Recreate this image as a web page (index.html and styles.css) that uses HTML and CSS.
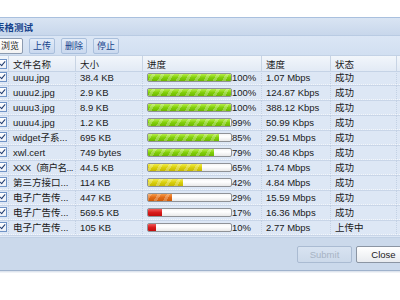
FILE: index.html
```html
<!DOCTYPE html>
<html>
<head>
<meta charset="utf-8">
<link rel="stylesheet" href="styles.css">
</head>
<body>
<div class="win">
  <div class="title"><span class="title-text">表格测试</span></div>
  <div class="toolbar">
    <span class="btn btn-browse">浏览</span>
    <span class="btn">上传</span>
    <span class="btn">删除</span>
    <span class="btn">停止</span>
  </div>
  <div class="grid">
    <div class="row head">
      <div class="c c0"><span class="cb"></span></div>
      <div class="c">文件名称</div>
      <div class="c">大小</div>
      <div class="c">进度</div>
      <div class="c">速度</div>
      <div class="c">状态</div>
      <div class="c last"></div>
    </div>
    <div class="body">
      <div class="inner">
        <div class="row"><div class="c c0"><span class="cb"></span></div><div class="c">uuuu.jpg</div><div class="c">38.4 KB</div><div class="c prog"><span class="bar"><span class="fill green" style="width:100%"></span></span><span class="pct">100%</span></div><div class="c">1.07 Mbps</div><div class="c">成功</div><div class="c last"></div></div>
        <div class="row"><div class="c c0"><span class="cb"></span></div><div class="c">uuuu2.jpg</div><div class="c">2.9 KB</div><div class="c prog"><span class="bar"><span class="fill green" style="width:100%"></span></span><span class="pct">100%</span></div><div class="c">124.87 Kbps</div><div class="c">成功</div><div class="c last"></div></div>
        <div class="row"><div class="c c0"><span class="cb"></span></div><div class="c">uuuu3.jpg</div><div class="c">8.9 KB</div><div class="c prog"><span class="bar"><span class="fill green" style="width:100%"></span></span><span class="pct">100%</span></div><div class="c">388.12 Kbps</div><div class="c">成功</div><div class="c last"></div></div>
        <div class="row"><div class="c c0"><span class="cb"></span></div><div class="c">uuuu4.jpg</div><div class="c">1.2 KB</div><div class="c prog"><span class="bar"><span class="fill green" style="width:99%"></span></span><span class="pct">99%</span></div><div class="c">50.99 Kbps</div><div class="c">成功</div><div class="c last"></div></div>
        <div class="row"><div class="c c0"><span class="cb"></span></div><div class="c">widget子系...</div><div class="c">695 KB</div><div class="c prog"><span class="bar"><span class="fill green" style="width:85%"></span></span><span class="pct">85%</span></div><div class="c">29.51 Mbps</div><div class="c">成功</div><div class="c last"></div></div>
        <div class="row"><div class="c c0"><span class="cb"></span></div><div class="c">xwl.cert</div><div class="c">749 bytes</div><div class="c prog"><span class="bar"><span class="fill green" style="width:79%"></span></span><span class="pct">79%</span></div><div class="c">30.48 Kbps</div><div class="c">成功</div><div class="c last"></div></div>
        <div class="row"><div class="c c0"><span class="cb"></span></div><div class="c tight">XXX（商户名...</div><div class="c">44.5 KB</div><div class="c prog"><span class="bar"><span class="fill yellow" style="width:65%"></span></span><span class="pct">65%</span></div><div class="c">1.74 Mbps</div><div class="c">成功</div><div class="c last"></div></div>
        <div class="row"><div class="c c0"><span class="cb"></span></div><div class="c">第三方接口...</div><div class="c">114 KB</div><div class="c prog"><span class="bar"><span class="fill yellow" style="width:42%"></span></span><span class="pct">42%</span></div><div class="c">4.84 Mbps</div><div class="c">成功</div><div class="c last"></div></div>
        <div class="row"><div class="c c0"><span class="cb"></span></div><div class="c">电子广告传...</div><div class="c">447 KB</div><div class="c prog"><span class="bar"><span class="fill orange" style="width:29%"></span></span><span class="pct">29%</span></div><div class="c">15.59 Mbps</div><div class="c">成功</div><div class="c last"></div></div>
        <div class="row"><div class="c c0"><span class="cb"></span></div><div class="c">电子广告传...</div><div class="c">569.5 KB</div><div class="c prog"><span class="bar"><span class="fill red" style="width:17%"></span></span><span class="pct">17%</span></div><div class="c">16.36 Mbps</div><div class="c">成功</div><div class="c last"></div></div>
        <div class="row"><div class="c c0"><span class="cb"></span></div><div class="c">电子广告传...</div><div class="c">105 KB</div><div class="c prog"><span class="bar"><span class="fill red" style="width:10%"></span></span><span class="pct">10%</span></div><div class="c">2.77 Mbps</div><div class="c">上传中</div><div class="c last"></div></div>
      </div>
    </div>
  </div>
  <div class="footer">
    <span class="fbtn disabled">Submit</span>
    <span class="fbtn">Close</span>
  </div>
</div>
</body>
</html>
```

FILE: styles.css
```css
html, body {
  margin: 0;
  padding: 0;
  background: #ffffff;
  overflow: hidden;
  width: 400px;
  height: 300px;
}
body {
  font-family: "Liberation Sans", Arial, "Noto Sans CJK SC", sans-serif;
  font-size: 9.5px;
  color: #1a1a1a;
}
.win {
  margin-top: 17px;
  width: 420px;
  border-top: 1px solid #a9c0de;
  border-bottom: 1px solid #9fb2cc;
  box-shadow: 0 1px 0 #dfe5ee, 0 2px 0 #f0f3f7;
  background: #cbd9eb;
}
.title {
  height: 17px;
  display: flex;
  align-items: center;
  background: linear-gradient(#d9e4f3, #c8d7eb);
  border-bottom: 1px solid #b9cbe3;
}
.title-text {
  margin-left: -5px;
  font-weight: bold;
  font-size: 9.5px;
  color: #15428b;
}
.toolbar {
  height: 19px;
  display: flex;
  align-items: center;
  gap: 6px;
  background: linear-gradient(#dbe6f5, #d1dff1);
  border-bottom: 1px solid #c3d2e6;
}
.btn {
  height: 14px;
  line-height: 14px;
  padding: 0 3px;
  width: 18px;
  text-align: center;
  border: 1px solid #a9bfdc;
  border-radius: 2px;
  background: linear-gradient(#e3ecf8, #c9d8ee);
  color: #15428b;
  font-size: 9px;
}
.btn-browse {
  margin-left: -8px;
  width: 23px;
  background: linear-gradient(#ffffff, #f3f3f3);
  border-color: #8c9bb0;
  color: #1a1a1a;
  text-align: right;
}
.grid {
  background: #dde7f5;
}
.row {
  display: grid;
  grid-template-columns: 9px 67px 67px 119px 69px 66px 1fr;
  height: 14px;
  border-bottom: 1px dotted #f4f7fb;
  box-shadow: 0 1px 0 rgba(160,180,210,0.35);
}
.head {
  height: 15px;
  border-bottom: 1px solid #c5d3e6;
  box-shadow: none;
  background: linear-gradient(#f2f6fb, #e2eaf5);
}
.c {
  display: flex;
  align-items: center;
  padding-left: 4px;
  white-space: nowrap;
  overflow: hidden;
  border-right: 1px dotted #c3d1e4;
}
.c.tight {
  letter-spacing: -0.5px;
}
.head .c {
  border-right: 1px solid #c8d4e4;
}
.c0 {
  padding-left: 0;
}
.c.last {
  border-right: none;
}
.cb {
  position: relative;
  flex: none;
  margin-left: -3px;
  width: 8px;
  height: 8px;
  border: 1px solid #6f93c6;
  background: linear-gradient(#ffffff, #e9eef6);
}
.cb::after {
  content: "";
  position: absolute;
  left: 3px;
  top: 0px;
  width: 2px;
  height: 5px;
  border-right: 1.5px solid #203c70;
  border-bottom: 1.5px solid #203c70;
  transform: rotate(40deg);
}
.body {
  height: 165px;
  overflow: hidden;
}
.inner {
  margin-top: -2px;
}
.body .row {
  height: 14px;
}
.prog {
  padding-left: 4px;
}
.bar {
  flex: none;
  display: block;
  width: 83px;
  height: 7px;
  border: 1px solid #8f9297;
  border-radius: 2px;
  background: linear-gradient(#f6f6f6, #ffffff 40%, #e8e8e8);
  overflow: hidden;
}
.fill {
  display: block;
  height: 100%;
}
.green {
  background: repeating-linear-gradient(-60deg, rgba(255,255,255,0) 0 5px, rgba(255,255,255,0.28) 5px 8px),
              linear-gradient(#b8ef4a, #82cf0a 50%, #6cb800);
}
.yellow {
  background: repeating-linear-gradient(-60deg, rgba(255,255,255,0) 0 5px, rgba(255,255,255,0.28) 5px 8px),
              linear-gradient(#f2ec4a, #d9cf0c 50%, #c4b800);
}
.orange {
  background: repeating-linear-gradient(-60deg, rgba(255,255,255,0) 0 5px, rgba(255,255,255,0.25) 5px 8px),
              linear-gradient(#f59a4a, #e06a16 50%, #cf5a08);
}
.red {
  background: linear-gradient(#ef5a5a, #d81c1c 50%, #c20c0c);
}
.footer {
  height: 32px;
  display: flex;
  align-items: center;
  padding-left: 297px;
  gap: 4px;
  background: #cbd9eb;
  border-top: 1px solid #c0d0e4;
}
.fbtn {
  height: 15px;
  line-height: 15px;
  width: 53px;
  text-align: center;
  border: 1px solid #8b95a3;
  border-radius: 2px;
  background: linear-gradient(#ffffff, #e8ebef);
  color: #1a1a1a;
  font-size: 9.5px;
}
.fbtn.disabled {
  color: #a7b3c4;
  border-color: #aabbd2;
  background: linear-gradient(#d8e3f1, #ccd9ea);
}
```
